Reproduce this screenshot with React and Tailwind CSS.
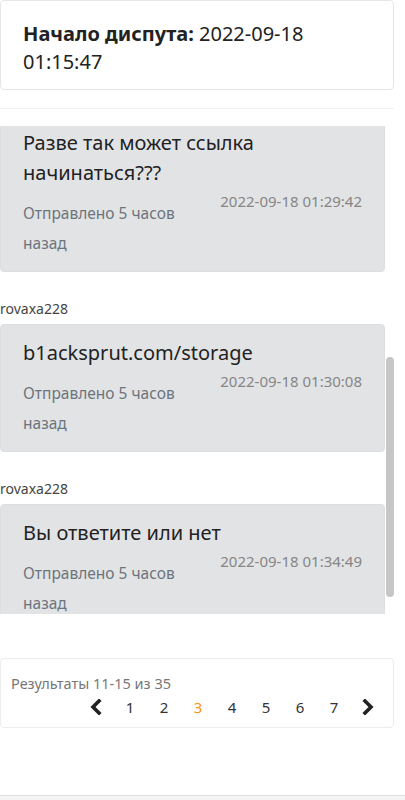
import React from "react";

const FONT = { fontFamily: '"Noto Sans", "Open Sans", sans-serif' };

function Chevron({ dir }) {
  return (
    <svg width="14" height="16" viewBox="0 0 14 16" className="block">
      {dir === "left" ? (
        <polyline points="10,2 4,8 10,14" fill="none" stroke="#222" strokeWidth="3.6" strokeLinecap="square" strokeLinejoin="miter" />
      ) : (
        <polyline points="4,2 10,8 4,14" fill="none" stroke="#222" strokeWidth="3.6" strokeLinecap="square" strokeLinejoin="miter" />
      )}
    </svg>
  );
}

function Bubble({ lines, time }) {
  return (
    <div className="bg-[#e2e3e5] border border-[#dcdee1] rounded-[4px] pl-[22px] pr-[22px] pt-[13px] pb-[13px]">
      {lines.map((l, i) => (
        <div key={i} className="text-[20px] leading-[30px] text-[#222]">{l}</div>
      ))}
      <div className="flex justify-between items-start">
        <div className="mt-[10px] text-[15.5px] leading-[30px] text-[#6c757d]">
          <div>Отправлено 5 часов</div>
          <div>назад</div>
        </div>
        <div className="text-[15px] leading-[26px] text-[#868686]">{time}</div>
      </div>
    </div>
  );
}

function Label() {
  return <div className="mt-[27px] mb-[5px] text-[14px] leading-[20px] text-[#444]">rovaxa228</div>;
}

export default function App() {
  return (
    <div className="w-[405px] h-[800px] bg-white overflow-hidden flex flex-col" style={FONT}>
      <div className="w-[394px] border border-[#e6e6e6] rounded-[4px] pl-[22px] pt-[19px] pb-[13px] text-[20px] leading-[28px] text-[#222]">
        <span className="font-bold">Начало диспута:</span> 2022-09-18
        <br />
        01:15:47
      </div>
      <div className="w-[394px] mt-[18px] h-px bg-[#eef0f5]" />
      <div className="relative w-[394px] mt-[17px] h-[488px] overflow-hidden">
        <div className="pr-[9px] -mt-[12px]">
          <Bubble lines={["Разве так может ссылка", "начинаться???"]} time="2022-09-18 01:29:42" />
          <Label />
          <Bubble lines={["b1acksprut.com/storage"]} time="2022-09-18 01:30:08" />
          <Label />
          <Bubble lines={["Вы ответите или нет"]} time="2022-09-18 01:34:49" />
        </div>
        <div className="absolute right-0 top-[231px] w-[8px] h-[240px] rounded-full bg-[#c6c6c6]" />
      </div>
      <div className="w-[394px] mt-[44px] border border-[#ececec] rounded-[4px] pt-[14px] pb-[8px]">
        <div className="pl-[10px] text-[14.5px] leading-[20px] text-[#777]">Результаты 11-15 из 35</div>
        <div className="flex items-center justify-end pr-[8px] mt-[2px] h-[24px] text-[15px] text-[#333]">
          <span className="w-[34px] flex justify-center"><Chevron dir="left" /></span>
          {[1, 2, 3, 4, 5, 6, 7].map((n) => (
            <span key={n} className={"w-[34px] text-center " + (n === 3 ? "text-[#f7941d]" : "")}>{n}</span>
          ))}
          <span className="w-[34px] flex justify-center"><Chevron dir="right" /></span>
        </div>
      </div>
      <div className="flex-1" />
      <div className="h-[5px] border-t border-[#dedede] bg-[#f4f4f4]" />
    </div>
  );
}
